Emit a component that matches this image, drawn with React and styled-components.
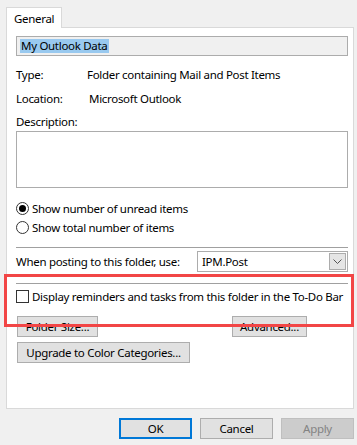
import React from 'react';
import styled, { createGlobalStyle } from 'styled-components';

const GlobalStyle = createGlobalStyle`
  html, body {
    margin: 0;
    padding: 0;
    background: #f0f0f0;
  }
  body {
    font-family: "Noto Sans", "Open Sans", sans-serif;
    font-size: 11.5px;
    letter-spacing: -0.3px;
    color: #000;
    white-space: nowrap;
  }
`;

const Window = styled.div`
  position: relative;
  width: 357px;
  height: 445px;
  padding-top: 7px;
  box-sizing: border-box;
  background: #f0f0f0;
`;

const TabStrip = styled.div`
  display: flex;
  padding-left: 6px;
`;

const Tab = styled.div`
  position: relative;
  z-index: 1;
  width: 56px;
  height: 21px;
  box-sizing: border-box;
  margin-bottom: -1px;
  padding-left: 7px;
  display: flex;
  align-items: center;
  background: #fff;
  border: 1px solid #d9d9d9;
  border-bottom: none;
`;

const Panel = styled.div`
  margin-left: 6px;
  width: 348px;
  height: 382px;
  box-sizing: border-box;
  padding: 0 5px 0 9px;
  background: #fff;
  border: 1px solid #d9d9d9;
  display: flex;
  flex-direction: column;
`;

const NameBox = styled.div`
  margin-top: 8px;
  height: 20px;
  box-sizing: border-box;
  border: 1px solid #acacac;
  background: #f0f0f0;
  display: flex;
  align-items: center;
  padding-left: 3px;
`;

const Selected = styled.span`
  background: #99c9ef;
  line-height: 14px;
  padding: 0 1px;
`;

const InfoRow = styled.div`
  display: flex;
  align-items: center;
  height: 24px;
  margin-top: ${p => p.$top || 0}px;
`;

const Label = styled.span`
  width: 71px;
  flex: none;
`;

const Value = styled.span`
  padding-left: ${p => p.$indent || 0}px;
`;

const DescLabel = styled.div`
  margin-top: 4px;
  height: 16px;
  line-height: 16px;
`;

const TextArea = styled.div`
  margin-top: 1px;
  height: 57px;
  box-sizing: border-box;
  border: 1px solid #acacac;
  background: #fff;
`;

const OptionRow = styled.label`
  display: flex;
  align-items: center;
  gap: 3px;
  height: 19px;
  margin-top: ${p => p.$top || 0}px;
`;

const Radio = styled.span`
  width: 13px;
  height: 13px;
  box-sizing: border-box;
  border-radius: 50%;
  border: 1px solid #333;
  background: #fff;
  display: flex;
  align-items: center;
  justify-content: center;
  flex: none;

  &::after {
    content: "";
    width: 7px;
    height: 7px;
    border-radius: 50%;
    background: ${p => (p.$checked ? '#000' : 'transparent')};
  }
`;

const CheckBox = styled.span`
  width: 13px;
  height: 13px;
  box-sizing: border-box;
  border: 1px solid #333;
  background: #fff;
  flex: none;
`;

const Separator = styled.div`
  height: 1px;
  background: #a0a0a0;
  margin-top: ${p => p.$top || 0}px;
`;

const PostRow = styled.div`
  display: flex;
  align-items: center;
  justify-content: space-between;
  margin-top: 3px;
  height: 21px;
`;

const Combo = styled.div`
  width: 151px;
  height: 21px;
  box-sizing: border-box;
  border: 1px solid #acacac;
  background: #fff;
  display: flex;
  align-items: center;
  justify-content: space-between;
  padding: 0 1px 0 4px;
`;

const ComboButton = styled.span`
  width: 17px;
  height: 17px;
  box-sizing: border-box;
  border: 1px solid #acacac;
  background: #e5e5e5;
  display: flex;
  align-items: center;
  justify-content: center;
`;

const CheckRow = styled.label`
  display: flex;
  align-items: center;
  gap: 3px;
  height: 16px;
  margin-top: 4px;
`;

const ButtonRow = styled.div`
  display: flex;
  justify-content: space-between;
  margin-top: ${p => p.$top || 0}px;
  padding: 0 41px 0 1px;
`;

const Button = styled.button`
  width: ${p => p.$w}px;
  height: 21px;
  box-sizing: border-box;
  padding: 0;
  font: inherit;
  letter-spacing: inherit;
  color: ${p => (p.$disabled ? '#838383' : '#000')};
  background: ${p => (p.$disabled ? '#cccccc' : '#e1e1e1')};
  border: ${p => (p.$default ? '2px solid #0078d7' : p.$disabled ? '1px solid #bfbfbf' : '1px solid #adadad')};
`;

const Footer = styled.div`
  display: flex;
  justify-content: flex-end;
  gap: 8px;
  padding-right: 3px;
  margin-top: 9px;
`;

const Highlight = styled.div`
  position: absolute;
  left: 4px;
  top: 274px;
  width: 350px;
  height: 53px;
  box-sizing: border-box;
  border: 3px solid #f24646;
  pointer-events: none;
`;

const Chevron = () => (
  <svg width="9" height="5" viewBox="0 0 9 5">
    <path d="M0.5 0.5 L4.5 4.5 L8.5 0.5" fill="none" stroke="#555" strokeWidth="1" />
  </svg>
);

const App = () => {
  return (
    <Window>
      <GlobalStyle />
      <TabStrip>
        <Tab>General</Tab>
      </TabStrip>
      <Panel>
        <NameBox>
          <Selected>My Outlook Data</Selected>
        </NameBox>
        <InfoRow $top={6}>
          <Label>Type:</Label>
          <Value>Folder containing Mail and Post Items</Value>
        </InfoRow>
        <InfoRow>
          <Label>Location:</Label>
          <Value $indent={2}>Microsoft Outlook</Value>
        </InfoRow>
        <DescLabel>Description:</DescLabel>
        <TextArea />
        <OptionRow $top={11}>
          <Radio $checked />
          Show number of unread items
        </OptionRow>
        <OptionRow>
          <Radio />
          Show total number of items
        </OptionRow>
        <Separator $top={10} />
        <PostRow>
          <span>When posting to this folder, use:</span>
          <Combo>
            <span>IPM.Post</span>
            <ComboButton>
              <Chevron />
            </ComboButton>
          </Combo>
        </PostRow>
        <Separator $top={11} />
        <CheckRow>
          <CheckBox />
          Display reminders and tasks from this folder in the To-Do Bar
        </CheckRow>
        <ButtonRow $top={12}>
          <Button $w={81}>Folder Size...</Button>
          <Button $w={75}>Advanced...</Button>
        </ButtonRow>
        <ButtonRow $top={5}>
          <Button $w={173}>Upgrade to Color Categories...</Button>
        </ButtonRow>
      </Panel>
      <Footer>
        <Button $w={73} $default>OK</Button>
        <Button $w={73}>Cancel</Button>
        <Button $w={73} $disabled>Apply</Button>
      </Footer>
      <Highlight />
    </Window>
  );
};

export default App;
